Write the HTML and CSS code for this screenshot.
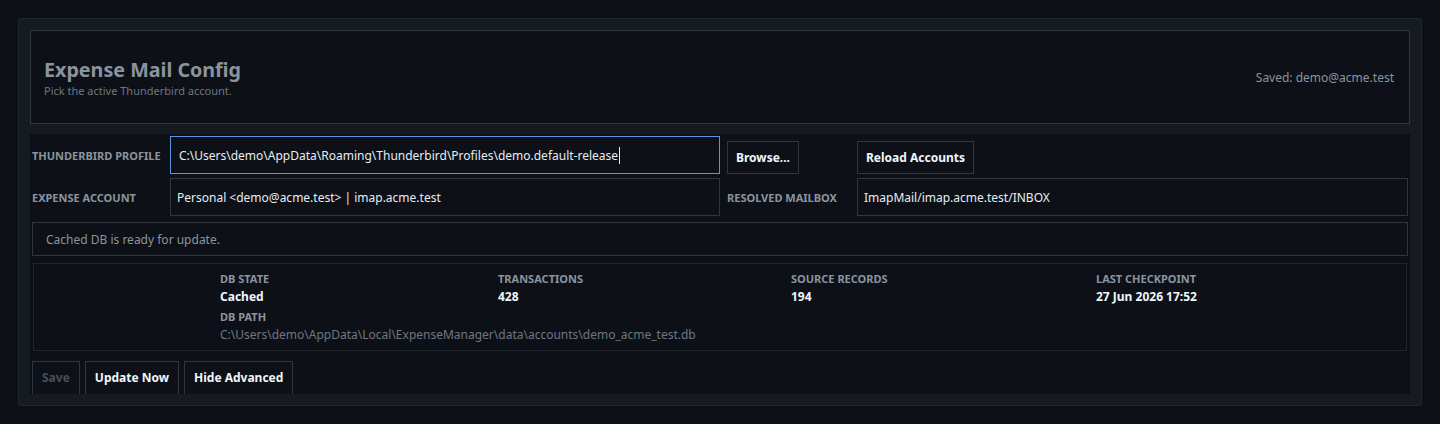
FILE: index.html
```html
<!DOCTYPE html>
<html lang="en">
<head>
  <meta charset="UTF-8" />
  <meta name="viewport" content="width=device-width, initial-scale=1.0" />
  <title>Expense Mail Config</title>
  <link rel="stylesheet" href="styles.css">
</head>
<body>
<div class="panel">
  <!-- Header -->
  <div class="header">
    <div class="header-text">
      <h1 class="title">Expense Mail Config</h1>
      <div class="subtitle">Pick the active Thunderbird account.</div>
    </div>
    <div class="saved">Saved: demo@acme.test</div>
  </div>

  <!-- Settings -->
  <div class="form">
    <div class="fields">
      <label class="field-label">Thunderbird Profile</label>
      <div class="field focused">C:\Users\demo\AppData\Roaming\Thunderbird\Profiles\demo.default-release<span class="caret"></span></div>
      <button class="btn btn-end">Browse...</button>
      <button class="btn btn-end">Reload Accounts</button>

      <label class="field-label">Expense Account</label>
      <div class="field">Personal &lt;demo@acme.test&gt; | imap.acme.test</div>
      <label class="field-label">Resolved Mailbox</label>
      <div class="field">ImapMail/imap.acme.test/INBOX</div>
    </div>

    <div class="status">Cached DB is ready for update.</div>

    <div class="stats">
      <div class="stat">
        <div class="stat-label">DB State</div>
        <div class="stat-value">Cached</div>
      </div>
      <div class="stat">
        <div class="stat-label">Transactions</div>
        <div class="stat-value">428</div>
      </div>
      <div class="stat">
        <div class="stat-label">Source Records</div>
        <div class="stat-value">194</div>
      </div>
      <div class="stat">
        <div class="stat-label">Last Checkpoint</div>
        <div class="stat-value">27 Jun 2026 17:52</div>
      </div>
      <div class="stat stat-wide">
        <div class="stat-label">DB Path</div>
        <div class="stat-path">C:\Users\demo\AppData\Local\ExpenseManager\data\accounts\demo_acme_test.db</div>
      </div>
    </div>

    <div class="actions">
      <button class="btn" disabled>Save</button>
      <button class="btn">Update Now</button>
      <button class="btn">Hide Advanced</button>
    </div>
  </div>
</div>
</body>
</html>
```

FILE: styles.css
```css
/* Base */
body {
  margin: 0;
  padding: 18px;
  background-color: #0d1117;
  font-family: "Noto Sans", "Open Sans", sans-serif;
  color: #e6edf3;
}
.panel {
  background: #161b22;
  border: 1px solid #1f262e;
  padding: 11px;
  display: flex;
  flex-direction: column;
  gap: 10px;
}

/* Header */
.header {
  height: 94px;
  box-sizing: border-box;
  border: 1px solid #30363d;
  background: #0d1117;
  padding: 0 15px 0 13px;
  display: flex;
  align-items: center;
  justify-content: space-between;
}
.title {
  margin: 0;
  font-size: 19.7px;
  font-weight: 700;
  line-height: 26px;
  color: #8b949e;
}
.subtitle {
  font-size: 11px;
  line-height: 15px;
  color: #6e7681;
}
.saved {
  font-size: 12px;
  color: #8b949e;
}

/* Form area */
.form {
  height: 260px;
  box-sizing: border-box;
  background: #0d1117;
  padding: 2px 2px 0 2px;
  overflow: hidden;
}
.fields {
  display: grid;
  grid-template-columns: 131px 550px 123px 1fr;
  column-gap: 7px;
  row-gap: 4px;
}
.field-label {
  align-self: center;
  font-size: 11px;
  font-weight: 700;
  text-transform: uppercase;
  color: #8b949e;
  white-space: nowrap;
}
.field {
  height: 38px;
  box-sizing: border-box;
  border: 1px solid #30363d;
  padding: 0 6px;
  display: flex;
  align-items: center;
  font-size: 12px;
  color: #e6edf3;
  white-space: nowrap;
}
.field.focused {
  border-color: #5b93e0;
  padding-left: 8px;
}
.caret {
  display: inline-block;
  width: 1px;
  height: 17px;
  background: #e6edf3;
  margin-left: 1px;
}

/* Buttons */
.btn {
  height: 33px;
  padding: 0 8px;
  font-family: inherit;
  font-size: 12px;
  font-weight: 700;
  color: #f0f6fc;
  background: #0d1117;
  border: 1px solid #30363d;
  cursor: pointer;
}
.btn:disabled {
  color: #484f58;
  cursor: default;
}
.btn-end {
  align-self: end;
  justify-self: start;
}

/* Status + stats */
.status {
  margin-top: 6px;
  height: 34px;
  box-sizing: border-box;
  border: 1px solid #30363d;
  padding: 0 13px;
  display: flex;
  align-items: center;
  font-size: 12px;
  color: #8b949e;
}
.stats {
  margin: 7px 1px 0 1px;
  height: 88px;
  box-sizing: border-box;
  border: 1px solid #21262d;
  padding: 6px 0 0 186px;
  display: grid;
  grid-template-columns: 278px 293px 305px auto;
  align-content: start;
}
.stat-wide {
  grid-column: 1 / -1;
  margin-top: 2px;
}
.stat-label {
  font-size: 11px;
  font-weight: 700;
  line-height: 18px;
  text-transform: uppercase;
  color: #8b949e;
}
.stat-value {
  font-size: 12px;
  font-weight: 700;
  line-height: 18px;
  color: #f0f6fc;
}
.stat-path {
  font-size: 12px;
  line-height: 18px;
  color: #6e7681;
}

.actions {
  margin-top: 10px;
  display: flex;
  gap: 5px;
}
.actions .btn {
  height: 40px;
  padding: 0 9px 7px 9px;
}
```
